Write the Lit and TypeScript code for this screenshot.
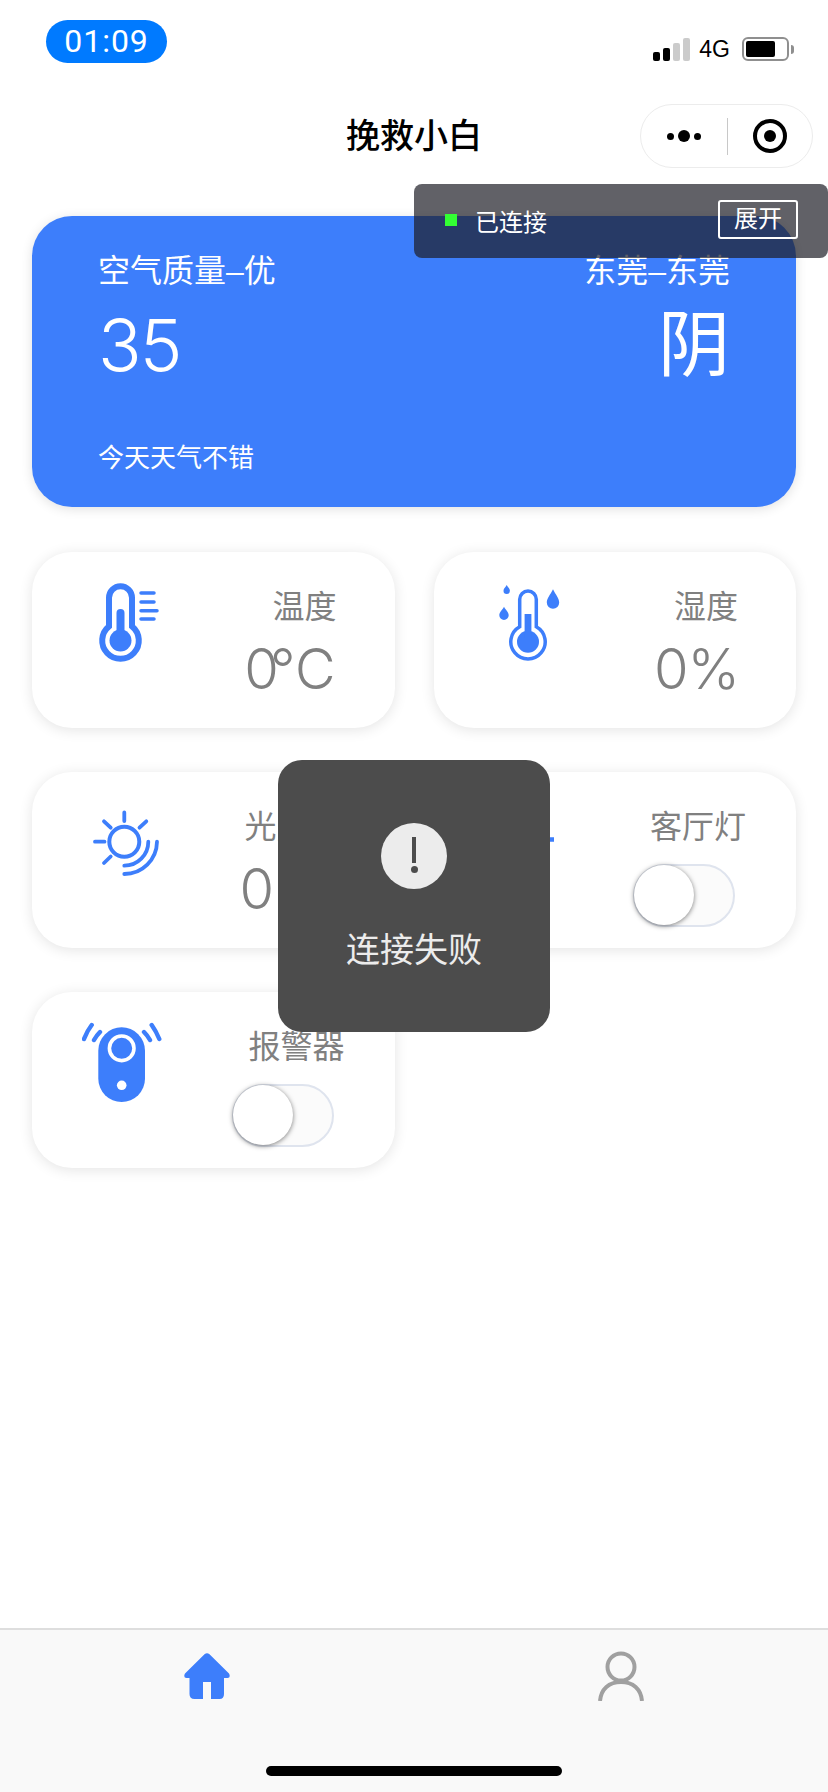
import { LitElement, html, css, svg } from "lit";
import { customElement } from "lit/decorators.js";

const BLUE = "#3d7efb";

const drop = (cx: number, top: number, r: number, h: number) => {
  const cy = top + h - r;
  return svg`<path fill=${BLUE} d="M${cx} ${top}C${cx + r * 0.45} ${top + h * 0.3} ${cx + r} ${cy - r * 0.7} ${cx + r} ${cy}A${r} ${r} 0 0 1 ${cx - r} ${cy}C${cx - r} ${cy - r * 0.7} ${cx - r * 0.45} ${top + h * 0.3} ${cx} ${top}Z"/>`;
};

const iconTemp = html`<svg viewBox="0 0 80 80" width="80" height="80" fill="none">
  <path stroke=${BLUE} stroke-width="6" d="M21 44.3V15.800a11.500 11.500 0 0 1 23 0V44.300A18.300 18.300 0 1 1 21 44.300Z"/>
  <circle cx="32.500" cy="58.500" r="11" fill=${BLUE}/>
  <rect x="28.500" y="27" width="8" height="28" rx="4" fill=${BLUE}/>
  <path stroke=${BLUE} stroke-width="3.500" stroke-linecap="round" d="M53 11H66M53 20H66M53 28.700H69M53 37H66"/>
</svg>`;

const iconHumidity = html`<svg viewBox="0 0 80 80" width="80" height="80" fill="none">
  <path stroke=${BLUE} stroke-width="3.500" d="M29.700 44.700V17.300a8.300 8.300 0 0 1 16.600 0V44.700A17.200 17.200 0 1 1 29.700 44.700Z"/>
  <circle cx="38" cy="59.700" r="11" fill=${BLUE}/>
  <rect x="34.600" y="32" width="6.800" height="24" fill=${BLUE}/>
  ${drop(63, 7.3, 6.2, 19.4)}
  ${drop(14, 24.7, 4.7, 13.3)}
  ${drop(16.7, 3, 3.2, 9)}
</svg>`;

const iconSun = html`<svg viewBox="0 0 80 80" width="80" height="80" fill="none" stroke=${BLUE} stroke-linecap="round">
  <circle cx="38.300" cy="39.700" r="15" stroke-width="4"/>
  <path stroke-width="3.800" d="M38.300 10.500V19M18 19.300L24.700 25.700M60.300 19.300L53.500 25.700M9 39.700H18.500M18 61L24.700 54.500"/>
  <path stroke-width="3.800" d="M62.300 39.700A24 24 0 0 1 38.300 63.700M71 39.700A32.700 32.700 0 0 1 38.300 72"/>
</svg>`;

const iconLamp = html`<svg viewBox="0 0 80 80" width="80" height="80" fill="none" stroke=${BLUE}>
  <circle cx="32" cy="34" r="16" stroke-width="4"/>
  <path stroke-width="4.500" d="M25 54H39M27 61H37M32 8V14M6 37.500H11M53 37.500H64"/>
</svg>`;

const iconAlarm = html`<svg viewBox="0 0 80 80" width="80" height="80" fill="none">
  <rect x="16.300" y="5.300" width="46.700" height="74.700" rx="23.350" fill=${BLUE}/>
  <circle cx="39.700" cy="26.300" r="12.300" stroke="#fff" stroke-width="3.600"/>
  <circle cx="39.700" cy="63.300" r="4.800" fill="#fff"/>
  <path stroke=${BLUE} stroke-width="4.400" stroke-linecap="round" d="M9.700 3Q5 9 2 17M18 10Q14.500 13.500 12 18M62 10Q65.500 13.500 68 18M69.700 3Q74 9 77.300 17"/>
</svg>`;

const iconHome = html`<svg viewBox="0 0 46 46" width="46" height="46">
  <path fill=${BLUE} d="M20.500 1.200Q23 -0.800 25.500 1.200L45 20.500Q47 24.500 43.500 25L40 25V41Q40 46 35.500 46H27V29H19V46H10.500Q5.500 46 5.500 41V25H2.500Q-1 24.500 1 20.500Z"/>
</svg>`;

const iconUser = html`<svg viewBox="0 0 46 50" width="46" height="50" fill="none" stroke="#a0a0a0" stroke-width="4">
  <circle cx="23" cy="16" r="13.500"/>
  <path d="M2 50C3 38 11 31 23 31S43 38 44 50"/>
</svg>`;

@customElement("app-toggle")
class AppToggle extends LitElement {
  static styles = css`
    :host { display: block; width: 102px; height: 63px; position: relative; }
    .track {
      box-sizing: border-box; width: 100%; height: 100%; border-radius: 32px;
      background: #fbfbfb; border: 2px solid #dfe4ee;
    }
    .knob {
      position: absolute; left: 1px; top: 1px; width: 60px; height: 60px; border-radius: 50%;
      background: #fff; box-shadow: 0 1px 5px rgba(0, 0, 0, 0.5);
    }
  `;
  render() {
    return html`<div class="track"></div><div class="knob"></div>`;
  }
}

@customElement("app-root")
class AppRoot extends LitElement {
  static styles = css`
    :host {
      display: block; width: 828px; height: 1792px; position: relative; overflow: hidden; background: #fff;
      font-family: "Liberation Sans", "Noto Sans CJK SC", sans-serif;
    }
    .page { display: flex; flex-direction: column; height: 100%; }

    .status { height: 88px; flex: none; display: flex; justify-content: space-between; box-sizing: border-box; padding: 20px 34px 0 46px; }
    .clock {
      width: 121px; height: 43px; border-radius: 22px; background: #007aff; color: #fff;
      font-family: Roboto, sans-serif; font-weight: 400;
      font-size: 32px; line-height: 43px; text-align: center; letter-spacing: 1px;
    }
    .indicators { display: flex; align-items: flex-end; height: 41px; gap: 9px; }
    .signal { display: flex; align-items: flex-end; gap: 3px; }
    .signal i { display: block; width: 7px; border-radius: 2px; background: #000; }
    .signal i.off { background: #cbcbcb; }
    .h1 { height: 9px; } .h2 { height: 13px; } .h3 { height: 18px; } .h4 { height: 23px; }
    .net { font-size: 23px; line-height: 23px; color: #000; height: 23px; margin-right: 3px; }
    .battery { display: flex; align-items: center; gap: 2px; }
    .cell { box-sizing: border-box; width: 47px; height: 24px; border: 2px solid #8f8f8f; border-radius: 6px; padding: 2px; }
    .cell b { display: block; width: 29px; height: 16px; background: #000; border-radius: 2px; }
    .nub { width: 3px; height: 9px; background: #8f8f8f; border-radius: 0 3px 3px 0; }

    .nav { height: 96px; flex: none; position: relative; display: flex; align-items: center; justify-content: center; }
    .title { font-size: 34px; font-weight: 500; color: #000; line-height: 48px; }
    .capsule {
      position: absolute; right: 15px; top: 16px; box-sizing: border-box; width: 173px; height: 64px;
      border: 1.500px solid #ececec; border-radius: 32px; display: flex; align-items: center; background: #fff;
    }
    .capsule .more { width: 86px; display: flex; justify-content: center; align-items: center; gap: 4px; }
    .more i { display: block; width: 7px; height: 7px; border-radius: 50%; background: #000; }
    .more i.big { width: 12px; height: 12px; }
    .capsule .sep { width: 1px; height: 37px; background: #c8c8c8; }
    .capsule .target { flex: 1; display: flex; justify-content: center; }
    .ring { box-sizing: border-box; width: 34px; height: 34px; border: 4.500px solid #000; border-radius: 50%; display: flex; align-items: center; justify-content: center; }
    .ring b { display: block; width: 12px; height: 12px; border-radius: 50%; background: #000; }

    .content { flex: 1; padding: 32px 32px 0; }
    .hero {
      box-sizing: border-box; height: 291px; border-radius: 40px; background: #3d7efb;
      box-shadow: 0 2px 12px rgba(0, 0, 0, 0.12); color: #fff; padding: 35px 66px 0;
      display: flex; flex-direction: column;
    }
    .row { display: flex; justify-content: space-between; }
    .num { font-family: Inter, "Noto Sans CJK SC", sans-serif; font-weight: 300; }
    .hero .line { font-size: 32px; line-height: 40px; }
    .hero .big { font-size: 72px; line-height: 84px; margin-top: 12px; }
    .hero .big .num { letter-spacing: -2px; }
    .hero .note { font-size: 26px; line-height: 36px; margin-top: 53px; }

    .grid { display: grid; grid-template-columns: 1fr 1fr; column-gap: 39px; row-gap: 44px; margin-top: 45px; }
    .card {
      height: 176px; border-radius: 40px; background: #fff; box-shadow: 0 2px 14px rgba(0, 0, 0, 0.11);
      display: flex; justify-content: space-between; box-sizing: border-box; padding: 30px 0 0 56px; color: #808080;
    }
    .card.alarm { padding-left: 50px; }
    .card.sun { padding-left: 54px; }
    .ic { width: 80px; height: 80px; }
    .ic svg { display: block; }
    .side { display: flex; flex-direction: column; align-items: flex-end; }
    .label { font-size: 32px; line-height: 44px; margin-right: 58px; margin-top: 3px; }
    .val { font-size: 56px; line-height: 72px; margin-right: 59px; margin-top: 4px; }
    .val .tight { letter-spacing: -9px; }
    .val.pct { margin-right: 57px; letter-spacing: -1px; }
    .sun .label { margin-right: 54px; }
    .wide .label { margin-right: 50px; }
    .card app-toggle { margin-right: 61px; margin-top: 15px; }

    .tabs { height: 164px; flex: none; box-sizing: border-box; background: #f9f9f9; border-top: 2px solid #dedede; position: relative; display: grid; grid-template-columns: 1fr 1fr; padding-top: 21px; }
    .tab { display: flex; justify-content: center; align-items: flex-start; }
    .tab svg { display: block; }
    .tab.home svg { margin-top: 2px; }
    .home-bar { position: absolute; left: 266px; top: 136px; width: 296px; height: 10px; border-radius: 5px; background: #000; }

    .float {
      position: absolute; left: 414px; top: 184px; width: 414px; height: 74px; border-radius: 8px;
      background: rgba(30, 30, 38, 0.7); display: flex; align-items: center; color: #fff; box-sizing: border-box; padding: 0 30px 0 31px;
    }
    .float .dot { width: 12px; height: 12px; background: #33ff33; margin-right: 18px; position: relative; top: -1px; }
    .float .txt { font-size: 24px; line-height: 34px; flex: 1; position: relative; top: 2px; }
    .float .btn { box-sizing: border-box; width: 80px; height: 39px; border: 2px solid #fff; border-radius: 3px; font-size: 24px; line-height: 33px; text-align: center; margin-top: -3px; }

    .toast {
      position: absolute; left: 278px; top: 760px; width: 272px; height: 272px; border-radius: 24px; background: #4c4c4c;
      display: flex; flex-direction: column; align-items: center; box-sizing: border-box; padding-top: 63px; color: #ececec;
    }
    .alert { width: 66px; height: 66px; border-radius: 50%; background: #ececec; position: relative; }
    .alert::before { content: ""; position: absolute; left: 31px; top: 14px; width: 4px; height: 26px; background: #4c4c4c; }
    .alert::after { content: ""; position: absolute; left: 29.500px; top: 43px; width: 7px; height: 7px; border-radius: 50%; background: #4c4c4c; }
    .msg { font-size: 34px; line-height: 48px; margin-top: 37px; }
  `;

  render() {
    return html`
      <div class="page">
        <div class="status">
          <div class="clock">01:09</div>
          <div class="indicators">
            <div class="signal"><i class="h1"></i><i class="h2"></i><i class="h3 off"></i><i class="h4 off"></i></div>
            <div class="net">4G</div>
            <div class="battery"><div class="cell"><b></b></div><div class="nub"></div></div>
          </div>
        </div>
        <div class="nav">
          <div class="title">挽救小白</div>
          <div class="capsule">
            <div class="more"><i></i><i class="big"></i><i></i></div>
            <div class="sep"></div>
            <div class="target"><div class="ring"><b></b></div></div>
          </div>
        </div>
        <div class="content">
          <div class="hero">
            <div class="row line"><span>空气质量–优</span><span>东莞–东莞</span></div>
            <div class="row big"><span class="num">35</span><span>阴</span></div>
            <div class="note">今天天气不错</div>
          </div>
          <div class="grid">
            <div class="card">
              <div class="ic">${iconTemp}</div>
              <div class="side"><div class="label">温度</div><div class="val num"><span class="tight">0</span>℃</div></div>
            </div>
            <div class="card">
              <div class="ic">${iconHumidity}</div>
              <div class="side"><div class="label">湿度</div><div class="val num pct">0%</div></div>
            </div>
            <div class="card sun">
              <div class="ic">${iconSun}</div>
              <div class="side"><div class="label">光照度</div><div class="val num">0Lx</div></div>
            </div>
            <div class="card wide">
              <div class="ic">${iconLamp}</div>
              <div class="side"><div class="label">客厅灯</div><app-toggle></app-toggle></div>
            </div>
            <div class="card wide alarm">
              <div class="ic">${iconAlarm}</div>
              <div class="side"><div class="label">报警器</div><app-toggle></app-toggle></div>
            </div>
          </div>
        </div>
        <div class="tabs">
          <div class="tab home">${iconHome}</div>
          <div class="tab">${iconUser}</div>
          <div class="home-bar"></div>
        </div>
      </div>
      <div class="float">
        <div class="dot"></div>
        <div class="txt">已连接</div>
        <div class="btn">展开</div>
      </div>
      <div class="toast">
        <div class="alert"></div>
        <div class="msg">连接失败</div>
      </div>
    `;
  }
}
